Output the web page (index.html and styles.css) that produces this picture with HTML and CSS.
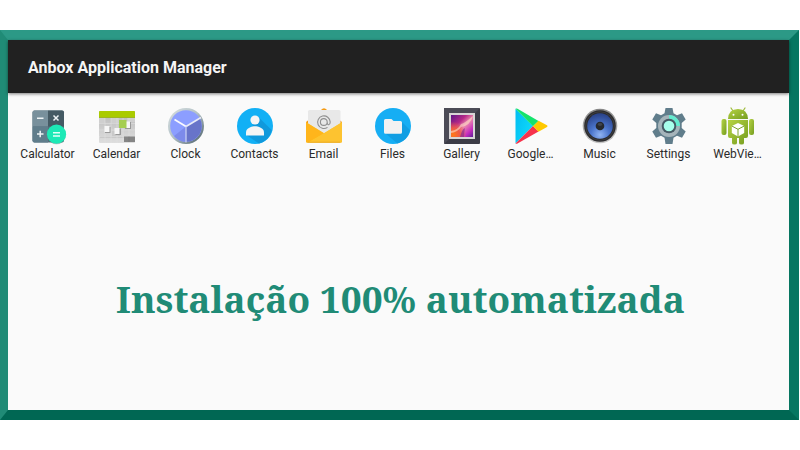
FILE: index.html
```html
<!DOCTYPE html>
<html lang="pt-BR">
<head>
<meta charset="utf-8">
<meta name="viewport" content="width=device-width, initial-scale=1">
<title>Anbox Application Manager</title>
<link rel="stylesheet" href="styles.css">
</head>
<body>
<main class="frame">
  <header class="bar"><h1 class="bar-title">Anbox Application Manager</h1></header>
  <nav class="apps" aria-label="Applications">
    <button class="app" type="button">
      <svg class="icon" viewBox="0 0 36 36" aria-hidden="true">
        <rect x="2.500" y="2.500" width="31.500" height="32" rx="2" fill="#546e7a"/>
        <path d="M4.500 2.500H18V18.500H2.500V4.500a2 2 0 0 1 2-2z" fill="#78909c"/>
        <path d="M18 2.500h14a2 2 0 0 1 2 2v14H18z" fill="#455a64"/>
        <path d="M2.500 18.500H18v16H4.500a2 2 0 0 1-2-2z" fill="#607d8b"/>
        <path d="M7 10.200h6.500M7 26h6.500M10.200 22.800v6.500M23.500 7.500l5 5M28.500 7.500l-5 5" stroke="#eef3f5" stroke-width="1.500"/>
        <circle cx="26.500" cy="26.800" r="9.500" fill="#455a64" opacity=".4"/>
        <circle cx="26.500" cy="26.200" r="9.600" fill="#1de9b6"/>
        <path d="M23 24.800h7M23 27.900h7" stroke="#e6fff9" stroke-width="1.500"/>
      </svg>
      <span class="label">Calculator</span>
    </button>
    <button class="app" type="button">
      <svg class="icon" viewBox="0 0 36 36" aria-hidden="true">
        <defs><linearGradient id="cal" x2="0" y2="1"><stop stop-color="#b9b9b9"/><stop offset="1" stop-color="#dedede"/></linearGradient></defs>
        <rect y="3" width="36" height="32" rx="1" fill="url(#cal)"/>
        <path d="M0 15h6v-5h6v5h8v-5h8v4h8V9H0z" fill="#cfcfcf"/>
        <path d="M1 28h12v-5h8v5h14v2H1z" fill="#c9c9c9"/>
        <path d="M0 15.500h36M0 22h36M0 28.500h36M6 10v25M12 10v25M18 10v25M24 10v25M30 10v25" stroke="#e2e2e2" stroke-width=".5"/>
        <path d="M25 28.500h11V34H25z" fill="#858585"/><path d="M30 28.500V34" stroke="#777" stroke-width=".6"/>
        <path d="M6 19h5.500v6H6zM16.500 20.500h5.500v6.500h-5.500zM26 14h6v7h-6z" fill="#999"/>
        <path d="M5.500 18h5v6h-5zM15.500 20h5v6h-5zM26.500 13.500h4.500V20h-4.500z" fill="#f7f7f7"/>
        <path d="M20 12h7.500V20H20z" fill="#a5ce51"/>
        <path d="M0 4a1 1 0 0 1 1-1h34a1 1 0 0 1 1 1v5.500H0z" fill="#aacb00"/>
        <path d="M0 9.500h36" stroke="#8faa08" stroke-width=".7"/>
      </svg>
      <span class="label">Calendar</span>
    </button>
    <button class="app" type="button">
      <svg class="icon" viewBox="0 0 36 36" aria-hidden="true">
        <defs><linearGradient id="ck" x2="1" y2="1"><stop stop-color="#d8dfe1"/><stop offset=".48" stop-color="#b3c2c6"/><stop offset="1" stop-color="#455a64"/></linearGradient></defs>
        <circle cx="18" cy="18" r="18" fill="url(#ck)"/>
        <circle cx="18" cy="18" r="15.800" fill="#8c9eff"/>
        <path d="M18 18.500 31.800 10.400A15.800 15.800 0 0 1 18 33.800z" fill="#6874c9"/>
        <path d="M18 18.500v15.300A15.800 15.800 0 0 1 6 28z" fill="#7d8beb"/>
        <path d="M18 18.500 6.500 11.500" stroke="#fafaff" stroke-width="1.700"/>
        <path d="M18 18.500 33 9.500" stroke="#e8eaf6" stroke-width="1.700"/>
        <path d="M18 18.500V34.500" stroke="#c8cff5" stroke-width="1.300"/>
      </svg>
      <span class="label">Clock</span>
    </button>
    <button class="app" type="button">
      <svg class="icon" viewBox="0 0 36 36" aria-hidden="true">
        <circle cx="18" cy="18" r="18" fill="#12b0f5"/>
        <path d="M21 8.500 34.800 22.300A18 18 0 0 1 22 35.500L10 27.500z" fill="#1099dc"/>
        <circle cx="18" cy="12" r="4.600" fill="#f5f5f5"/>
        <path d="M9 27.500v-3.200c0-4.200 6-6 9-6s9 1.800 9 6v3.200z" fill="#f5f5f5"/>
      </svg>
      <span class="label">Contacts</span>
    </button>
    <button class="app" type="button">
      <svg class="icon" viewBox="0 0 36 36" aria-hidden="true">
        <path d="M0 14 16.500.8q1.500-1 3 0L36 14v19q0 1.500-1.500 1.500h-33Q0 34.500 0 33z" fill="#f59b14"/>
        <rect x="2" y="2" width="32.500" height="28" rx="1.500" fill="#e8e8e8"/>
        <path d="M21.200 14.200a3.400 3.400 0 1 1-3.400-3.600 3.400 3.400 0 0 1 3.400 3.600c0 4 3 3 3-.2a6.300 6.300 0 1 0-2.700 5.400" fill="none" stroke="#8f8f8f" stroke-width="1.100"/>
        <path d="M0 14.200 18 25.200 36 14.200V33q0 1.500-1.500 1.500h-33Q0 34.500 0 33z" fill="#ffca28"/>
        <path d="M0 14.200 18 25.200 2 34.500H1.500Q0 34.500 0 33z" fill="#ffb51b"/>
        <path d="M18 25.200 36 14.200V33q0 1.500-1.500 1.500H3z" fill="#fdc330"/>
        <path d="M2 34.200h32" stroke="#e5a526" stroke-width=".7"/>
      </svg>
      <span class="label">Email</span>
    </button>
    <button class="app" type="button">
      <svg class="icon" viewBox="0 0 36 36" aria-hidden="true">
        <circle cx="18" cy="18" r="18" fill="#16aef4"/>
        <path d="M26 13 35 22a18 18 0 0 1-12.500 13.400L10 25z" fill="#119ee3"/>
        <path d="M10.500 11h6l2 2h7q1.500 0 1.500 1.500v9.800q0 1.500-1.500 1.500h-15Q9 25.800 9 24.300V12.500q0-1.500 1.500-1.500z" fill="#f2f2f2"/>
      </svg>
      <span class="label">Files</span>
    </button>
    <button class="app" type="button">
      <svg class="icon" viewBox="0 0 36 36" aria-hidden="true">
        <defs>
          <linearGradient id="ga" x1="0" y1="0" x2="1" y2="1"><stop stop-color="#5b1685"/><stop offset=".35" stop-color="#b62888"/><stop offset=".55" stop-color="#ed8caf"/><stop offset=".8" stop-color="#c62bbd"/><stop offset="1" stop-color="#5e2096"/></linearGradient>
          <radialGradient id="gb" cx=".1" cy=".9" r=".6"><stop stop-color="#ff7a17"/><stop offset=".5" stop-color="#ed5948"/><stop offset="1" stop-color="#ed5948" stop-opacity="0"/></radialGradient>
        </defs>
        <rect width="36" height="36" rx="1" fill="#3c3c46"/>
        <path d="M0 0h36l-5 5H5v26l-5 5z" fill="#4b4b56"/>
        <rect x="5" y="5" width="26" height="26" fill="#d8d5d6"/>
        <rect x="7" y="7" width="22" height="22" fill="url(#ga)"/>
        <rect x="7" y="7" width="22" height="22" fill="url(#gb)"/>
        <path d="M7 23q7-1 10-7 4-1 12-8-3 10-12 11-3 5-10 6z" fill="#ffe0c8" opacity=".6"/>
        <path d="M16 29q2-8 5-9-1 4-1 9z" fill="#7a278f" opacity=".6"/>
      </svg>
      <span class="label">Gallery</span>
    </button>
    <button class="app" type="button">
      <svg class="icon" viewBox="0 0 36 36" aria-hidden="true">
        <defs><linearGradient id="gp" x2="1" y2=".6"><stop stop-color="#00bdf2"/><stop offset="1" stop-color="#10d9fa"/></linearGradient></defs>
        <path d="M2.500 35.400V.8L20 18z" fill="url(#gp)"/>
        <path d="M2.500.8Q3.300 0 4.500.8L25.500 13 20 18.300z" fill="#14e36d"/>
        <path d="M2.500 35.400q.8.800 2 .1L25.500 23.500 20 18z" fill="#f7334c"/>
        <path d="M25.500 12.700 34 17.300q1.200.8 0 1.600L25.500 23.700 20 18.200z" fill="#ffc900"/>
      </svg>
      <span class="label">Google…</span>
    </button>
    <button class="app" type="button">
      <svg class="icon" viewBox="0 0 36 36" aria-hidden="true">
        <defs>
          <radialGradient id="mu" cx=".5" cy=".85" r=".8"><stop stop-color="#90b4f2"/><stop offset=".45" stop-color="#4b75cc"/><stop offset="1" stop-color="#2b458d"/></radialGradient>
          <linearGradient id="mr" x2="0" y2="1"><stop stop-color="#858585"/><stop offset="1" stop-color="#c6c6c6"/></linearGradient>
        </defs>
        <circle cx="18" cy="18" r="17.300" fill="url(#mr)"/>
        <circle cx="18" cy="18" r="15.800" fill="#2b2b2d"/>
        <circle cx="18" cy="18" r="14.300" fill="none" stroke="#48484b" stroke-width=".6"/>
        <circle cx="18" cy="18" r="12.800" fill="url(#mu)"/>
        <circle cx="18" cy="18" r="4.300" fill="#25282e"/>
        <ellipse cx="18" cy="16.500" rx="2.200" ry="1.400" fill="#40444b"/>
      </svg>
      <span class="label">Music</span>
    </button>
    <button class="app" type="button">
      <svg class="icon" viewBox="0 0 36 36" aria-hidden="true">
        <path d="M14.500 0h7l1 5.200 3.500 2 5-1.900 3.700 6.300-4 3.300v5.200l4 3.300-3.700 6.300-5-1.900-3.500 2-1 6.200h-7l-1-6.200-3.500-2-5 1.900-3.700-6.300 4-3.300v-5.200l-4-3.300L5 5.300l5 1.900 3.500-2z" fill="#607d8b"/>
        <circle cx="18" cy="18" r="11" fill="#a5b4ba"/>
        <path d="M18 7a11 11 0 0 1 11 11h-4a7 7 0 0 0-7-7z" fill="#64ebcf"/>
        <circle cx="18" cy="18" r="7.300" fill="#455a64"/>
        <circle cx="18" cy="18" r="5.300" fill="#a7ffeb"/>
      </svg>
      <span class="label">Settings</span>
    </button>
    <button class="app" type="button">
      <svg class="icon" viewBox="0 0 36 36" aria-hidden="true">
        <defs><linearGradient id="an" x2="1" y2="1"><stop stop-color="#b6d343"/><stop offset="1" stop-color="#759d20"/></linearGradient></defs>
        <path d="m13 3-2-3M23 3l2-3" stroke="#9dba38" stroke-width="1.200" stroke-linecap="round"/>
        <path d="M8 11Q8.500 1 18 1t10 10z" fill="url(#an)"/>
        <circle cx="13.500" cy="6.700" r="1" fill="#fff"/><circle cx="22.500" cy="6.700" r="1" fill="#fff"/>
        <rect x="1.500" y="11" width="5" height="16" rx="2" fill="url(#an)"/>
        <rect x="29" y="11" width="5" height="16" rx="2" fill="url(#an)"/>
        <path d="M8 12h20v16q0 2-2 2h-2v5q0 1.500-2.500 1.500T19 35v-5h-2v5q0 1.500-2.500 1.500T12 35v-5h-2q-2 0-2-2z" fill="url(#an)"/>
        <path d="m18 15 6.200 3v7L18 28.500 11.800 25v-7z" fill="#fff"/>
        <path d="m11.800 18 6.200 3.300 6.200-3.300M18 21.300v7.200" fill="none" stroke="#7da22c" stroke-width="1"/>
      </svg>
      <span class="label">WebVie…</span>
    </button>
  </nav>
  <p class="message">Instalação 100% automatizada</p>
</main>
</body>
</html>
```
FILE: styles.css
```css
* {
  box-sizing: border-box;
}

body {
  margin: 0;
  padding: 30px 1px 30px 0;
  min-height: 100vh;
  display: flex;
  background: #fff;
  font-family: Roboto, "Open Sans", sans-serif;
}

.frame {
  flex: 1;
  min-width: 0;
  display: flex;
  flex-direction: column;
  border-style: solid;
  border-width: 10px 10px 10px 8px;
  border-color: #2c9986 #067661 #006753 #208b76;
  background: #fafafa;
}

.bar {
  padding: 15px 20px 13px;
  background: #212121;
  box-shadow: 0 1px 3px rgba(0, 0, 0, 0.5);
}

.bar-title {
  margin: 0;
  color: #f5f5f5;
  font-size: 16px;
  font-weight: 700;
  line-height: 25px;
}

.apps {
  display: grid;
  grid-template-columns: repeat(auto-fill, 69px);
  padding: 15px 5px 0;
}

.app {
  display: flex;
  flex-direction: column;
  align-items: center;
  gap: 2px;
  padding: 0;
  border: 0;
  background: none;
  color: #2b2b2b;
  font: inherit;
}

.icon {
  width: 36px;
  height: 36px;
  overflow: visible;
}

.label {
  white-space: nowrap;
  font-size: 12px;
  line-height: 16px;
}

.message {
  margin: auto;
  padding: 26px 0 0 4px;
  color: #208b76;
  font-family: "Noto Serif", "Droid Serif", "DejaVu Serif", serif;
  font-size: 37px;
  font-weight: 700;
  line-height: 52px;
  text-align: center;
}
```
